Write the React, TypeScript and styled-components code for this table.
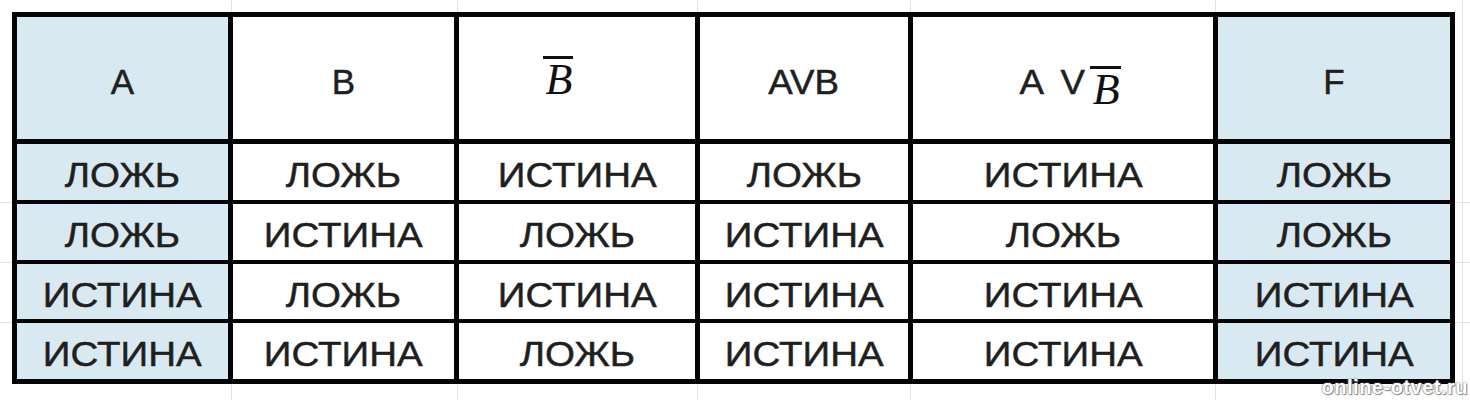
import React from "react";
import styled, { createGlobalStyle } from "styled-components";

const GlobalStyle = createGlobalStyle`
  html, body {
    margin: 0;
    padding: 0;
    background: #ffffff;
  }
`;

const grid = "#e3e3e3";

const Page = styled.div`
  position: relative;
  width: 1470px;
  height: 400px;
  box-sizing: border-box;
  padding: 12px 0 0 12px;
  overflow: hidden;
  background-color: #ffffff;
  background-image:
    linear-gradient(to right, transparent 231px, ${grid} 231px, ${grid} 232px, transparent 232px),
    linear-gradient(to right, transparent 457px, ${grid} 457px, ${grid} 458px, transparent 458px),
    linear-gradient(to right, transparent 697px, ${grid} 697px, ${grid} 698px, transparent 698px),
    linear-gradient(to right, transparent 910px, ${grid} 910px, ${grid} 911px, transparent 911px),
    linear-gradient(to right, transparent 1215px, ${grid} 1215px, ${grid} 1216px, transparent 1216px),
    linear-gradient(to right, transparent 1462px, ${grid} 1462px, ${grid} 1463px, transparent 1463px),
    linear-gradient(to bottom, transparent 202px, ${grid} 202px, ${grid} 203px, transparent 203px),
    linear-gradient(to bottom, transparent 262px, ${grid} 262px, ${grid} 263px, transparent 263px),
    linear-gradient(to bottom, transparent 322px, ${grid} 322px, ${grid} 323px, transparent 323px);
`;

const Table = styled.div`
  display: grid;
  width: fit-content;
  grid-template-columns: 211px 221px 236px 208px 300px 232px;
  grid-template-rows: 123px 56px 56px 55px 56px;
  column-gap: 5px;
  row-gap: 4px;
  padding: 5px;
  background: #050505;
`;

const Cell = styled.div<{ $blue?: boolean; $head?: boolean; $shift?: number }>`
  display: flex;
  align-items: center;
  justify-content: center;
  box-sizing: border-box;
  margin-bottom: ${(p) => (p.$head ? "1px" : "0")};
  padding-top: ${(p) => (p.$head ? "6px" : "5px")};
  padding-left: ${(p) => p.$shift ?? 0}px;
  background: ${(p) => (p.$blue ? "#d9e9f2" : "#ffffff")};
  color: #1f1f1f;
  font-family: "Liberation Sans", Arial, sans-serif;
  font-size: 35px;
  line-height: 1;
  white-space: pre;
  -webkit-text-stroke: 0.5px #1f1f1f;
`;

const Word = styled.span`
  display: inline-block;
  transform: scaleX(1.1);
`;

const Spaced = styled.span`
  display: inline-block;
  word-spacing: 8px;
  transform: scaleX(1.05);
`;

const NotB = styled.span<{ $drop?: boolean }>`
  display: inline-block;
  position: relative;
  top: ${(p) => (p.$drop ? "6px" : "-4px")};
  margin-left: ${(p) => (p.$drop ? "6px" : "0")};
  margin-right: ${(p) => (p.$drop ? "0" : "38px")};
  padding: 3px 1px 0 3px;
  border-top: 3px solid #111;
  font-family: "Liberation Serif", "Times New Roman", serif;
  font-style: italic;
  font-size: 44px;
  line-height: 0.8;
  color: #111;
  -webkit-text-stroke: 0;
`;

const Watermark = styled.div`
  position: absolute;
  right: 2px;
  bottom: 1px;
  font-family: "Liberation Sans", Arial, sans-serif;
  font-weight: bold;
  font-size: 20px;
  letter-spacing: 0.5px;
  color: #ffffff;
  text-shadow: 0 0 2px #707070, 0 0 1px #808080, 1px 1px 1px #909090;
`;

const L = "ЛОЖЬ";
const I = "ИСТИНА";

const rows: string[][] = [
  [L, L, I, L, I, L],
  [L, I, L, I, L, L],
  [I, L, I, I, I, I],
  [I, I, L, I, I, I],
];

const isBlue = (col: number) => col === 0 || col === 5;

export default function App() {
  return (
    <>
      <GlobalStyle />
      <Page>
        <Table>
          <Cell $head $blue>
            A
          </Cell>
          <Cell $head>B</Cell>
          <Cell $head>
            <NotB>B</NotB>
          </Cell>
          <Cell $head>
            <Spaced>AVB</Spaced>
          </Cell>
          <Cell $head $shift={16}>
            <Spaced>{"A V"}</Spaced>
            <NotB $drop>B</NotB>
          </Cell>
          <Cell $head $blue>
            F
          </Cell>
          {rows.map((row, r) =>
            row.map((v, c) => (
              <Cell key={`${r}-${c}`} $blue={isBlue(c)}>
                <Word>{v}</Word>
              </Cell>
            ))
          )}
        </Table>
        <Watermark>online-otvet.ru</Watermark>
      </Page>
    </>
  );
}
